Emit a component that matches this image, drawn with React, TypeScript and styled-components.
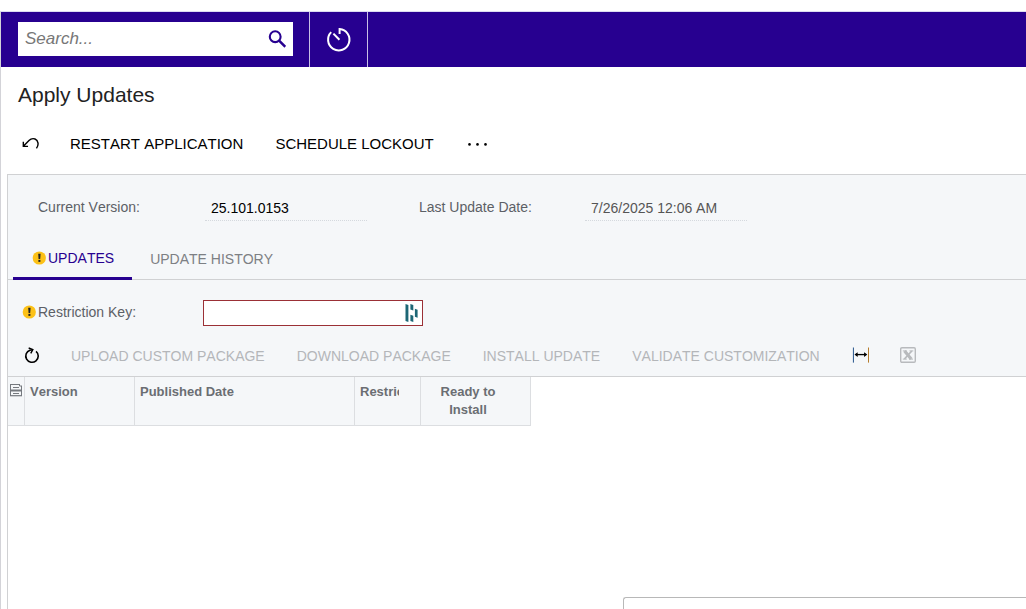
import React from "react";
import styled, { createGlobalStyle, css } from "styled-components";

const brand = "#270090";
const line = "#d0d1d3";
const panel = "#f5f7f9";

const GlobalStyle = createGlobalStyle`
  *, *::before, *::after { box-sizing: border-box; }
  body {
    margin: 0;
    background: #fff;
    color: #222;
    font-family: "Liberation Sans", Arial, sans-serif;
    font-size: 14px;
    font-kerning: none;
    line-height: 18px;
    overflow: hidden;
  }
  button, input { font: inherit; font-kerning: none; color: inherit; }
`;

const Page = styled.div`
  display: flex;
  flex-direction: column;
  min-height: 100vh;
  padding-top: 11px;
`;

const Frame = styled.div`
  display: flex;
  flex-direction: column;
  flex: 1;
  border-top: 1px solid #dcdcf0;
  border-left: 1px solid #d3d3d8;
`;

const TopBar = styled.header`
  display: flex;
  height: 55px;
  background: ${brand};
`;

const SearchForm = styled.form`
  display: flex;
  align-items: center;
  width: 275px;
  height: 34px;
  margin: 10px 16px 0 17px;
  background: #fff;
`;

const SearchInput = styled.input`
  flex: 1;
  min-width: 0;
  height: 32px;
  padding: 0 7px;
  border: 0;
  outline: 0;
  background: transparent;
  font-size: 17px;
  font-style: italic;
  &::placeholder { color: #777; opacity: 1; }
`;

const IconButton = styled.button`
  display: flex;
  align-items: center;
  justify-content: center;
  flex: none;
  padding: 0;
  border: 0;
  background: none;
  cursor: pointer;
`;

const SearchButton = styled(IconButton)`
  width: 32px;
  height: 32px;
`;

const HistoryButton = styled(IconButton)`
  width: 59px;
  border-left: 1px solid #c9bfe6;
  border-right: 1px solid #c9bfe6;
`;

const Title = styled.h1`
  margin: 0;
  padding: 16px 17px 0;
  font-size: 21px;
  line-height: 24px;
  font-weight: 400;
`;

const Toolbar = styled.div<{ $compact?: boolean }>`
  display: flex;
  align-items: center;
  white-space: nowrap;
  gap: 31px;
  ${(p) =>
    p.$compact
      ? css`
          height: 40px;
          padding: 0 15px;
          font-size: 14px;
        `
      : css`
          height: 67px;
          padding: 6px 21px 0;
          font-size: 15px;
        `}
`;

const ToolButton = styled.button`
  flex: none;
  padding: 0 1px 0 0;
  border: 0;
  background: none;
  color: #000;
  cursor: pointer;
  &:disabled { color: #b4b6b9; cursor: default; }
`;

const ToolIcon = styled(IconButton)<{ $wide?: boolean }>`
  width: ${(p) => (p.$wide ? 22 : 17)}px;
  height: 20px;
`;

const Content = styled.main`
  display: flex;
  flex-direction: column;
  flex: 1;
  margin-left: 6px;
  border-top: 1px solid ${line};
  border-left: 1px solid ${line};
`;

const Panel = styled.section`
  background: ${panel};
`;

const Summary = styled.div`
  display: grid;
  grid-template-columns: 167px 162px 52px 166px 162px;
  padding: 20px 0 0 30px;
  height: 65px;
`;

const Label = styled.label`
  color: #5c6066;
  line-height: 24px;
  white-space: nowrap;
`;

const ReadOnly = styled.input<{ $strong?: boolean }>`
  width: 100%;
  height: 26px;
  padding: 0 6px;
  border: 0;
  border-bottom: 1px dotted #d5d9de;
  outline: 0;
  background: transparent;
  color: ${(p) => (p.$strong ? "#000" : "#555")};
`;

const Gap = styled.span``;

const Tabs = styled.div`
  display: flex;
  height: 40px;
  padding-left: 5px;
  border-bottom: 1px solid ${line};
`;

const Tab = styled.button<{ $active?: boolean }>`
  display: flex;
  align-items: center;
  gap: 2px;
  height: 40px;
  padding: ${(p) => (p.$active ? "0 18px 1px 19px" : "1px 18px 3px")};
  border: 0;
  border-bottom: ${(p) => (p.$active ? "3px" : "0")} solid ${brand};
  background: none;
  color: ${(p) => (p.$active ? brand : "#7d8084")};
  white-space: nowrap;
  cursor: pointer;
`;

const KeyRow = styled.div`
  display: flex;
  align-items: center;
  height: 56px;
  padding: 10px 0 0 14px;
`;

const KeyLabel = styled(Label)`
  display: flex;
  align-items: center;
  gap: 2px;
  width: 181px;
  padding-bottom: 2px;
`;

const KeyField = styled.div`
  display: flex;
  align-items: center;
  width: 220px;
  height: 26px;
  padding-right: 3px;
  border: 1px solid #9b3036;
  background: #fff;
`;

const KeyInput = styled.input`
  flex: 1;
  min-width: 0;
  height: 22px;
  padding: 0 6px;
  border: 0;
  outline: 0;
  background: transparent;
`;

const GridArea = styled.div`
  border-top: 1px solid ${line};
`;

const Table = styled.table`
  table-layout: fixed;
  width: 523px;
  border-collapse: separate;
  border-spacing: 0;
`;

const HeadCell = styled.th<{ $w: number; $align?: string; $tight?: boolean }>`
  width: ${(p) => p.$w}px;
  height: 49px;
  padding: ${(p) => (p.$tight ? "6px 0 0 1px" : "6px 5px 0")};
  border-right: 1px solid #dcdee1;
  border-bottom: 1px solid #dcdee1;
  background: ${panel};
  color: #6b6e73;
  font-size: 13px;
  font-weight: 700;
  line-height: 18px;
  text-align: ${(p) => p.$align || "left"};
  vertical-align: top;
`;

const Clip = styled.div`
  width: 39px;
  overflow: hidden;
  white-space: nowrap;
`;

const TwoLine = styled.div`
  width: 84px;
  padding: 0 8px;
`;

const Notice = styled.aside`
  width: 403px;
  height: 12px;
  margin: auto 0 0 auto;
  border: 1px solid #b8b8b8;
  border-right: 0;
  border-bottom: 0;
  border-top-left-radius: 3px;
`;

const Warning = () => (
  <svg width="14" height="14" viewBox="0 0 14 14" aria-hidden="true">
    <circle cx="7.3" cy="7" r="6.6" fill="#fcc117" />
    <path d="M6.2 2.8h2.4L8.2 8H6.6z" fill="#222" />
    <rect x="6.4" y="8.9" width="2" height="2" fill="#222" />
  </svg>
);

export default function App() {
  return (
    <Page>
      <GlobalStyle />
      <Frame>
        <TopBar>
          <SearchForm role="search" onSubmit={(e) => e.preventDefault()}>
            <SearchInput aria-label="Search" placeholder="Search..." />
            <SearchButton aria-label="Run search">
              <svg width="18" height="18" viewBox="0 0 18 18" fill="none" stroke={brand}>
                <circle cx="7.2" cy="6.7" r="5.4" strokeWidth="2.1" />
                <path d="M11.1 10.6l6.2 6.2" strokeWidth="2.5" />
              </svg>
            </SearchButton>
          </SearchForm>
          <HistoryButton aria-label="Recent">
            <svg width="26" height="26" viewBox="0 0 26 26" fill="none" stroke="#fff" strokeWidth="2">
              <path d="M5.2 5.1A10.7 10.7 0 1 0 13.6 2V7" />
              <path d="M7.4 6.6l6 6.2" />
            </svg>
          </HistoryButton>
        </TopBar>

        <Title>Apply Updates</Title>
        <Toolbar>
          <ToolIcon aria-label="Cancel">
            <svg width="18" height="14" viewBox="0 0 18 14" fill="none" stroke="#000" strokeWidth="1.5">
              <path d="M1.4 4.5V9.5h5M1.7 9.2L7.4 3.4C9.2 1.5 11.6.9 13.8 1.7c3.5 1.3 4.3 6.2 1.5 9.9" />
            </svg>
          </ToolIcon>
          <ToolButton>RESTART APPLICATION</ToolButton>
          <ToolButton>SCHEDULE LOCKOUT</ToolButton>
          <ToolIcon $wide aria-label="More">
            <svg width="20" height="4" viewBox="0 0 20 4" fill="#000">
              <circle cx="2.5" cy="2.4" r="1.3" />
              <circle cx="10.5" cy="2.4" r="1.3" />
              <circle cx="18.5" cy="2.4" r="1.3" />
            </svg>
          </ToolIcon>
        </Toolbar>

        <Content>
          <Panel>
            <Summary>
              <Label htmlFor="version">Current Version:</Label>
              <ReadOnly id="version" $strong readOnly value="25.101.0153" />
              <Gap />
              <Label htmlFor="updated">Last Update Date:</Label>
              <ReadOnly id="updated" readOnly value="7/26/2025 12:06 AM" />
            </Summary>

            <Tabs role="tablist">
              <Tab role="tab" aria-selected="true" $active>
                <Warning />
                UPDATES
              </Tab>
              <Tab role="tab" aria-selected="false">UPDATE HISTORY</Tab>
            </Tabs>

            <KeyRow>
              <KeyLabel htmlFor="key">
                <Warning />
                Restriction Key:
              </KeyLabel>
              <KeyField>
                <KeyInput id="key" />
                <IconButton type="button" aria-label="Fill from password manager">
                  <svg width="14" height="18" viewBox="0 0 14 18" fill="#1c6675">
                    <path d="M.5 0L3.4 1v17L.5 17z" />
                    <path d="M5.4 0l2.9 1v5.6l-2.9-1z" />
                    <path d="M5.4 10.8l2.9 1V18l-2.9-1z" />
                    <path d="M9.9 4.8l2.7 1v8l-2.7-1z" />
                  </svg>
                </IconButton>
              </KeyField>
            </KeyRow>

            <Toolbar $compact>
              <ToolIcon aria-label="Refresh">
                <svg width="18" height="18" viewBox="0 0 18 18" fill="none" stroke="#000" strokeWidth="1.7">
                  <path d="M13.8 4A6.6 6.6 0 1 1 7.4 2.8" />
                  <path d="M6 .5l4.4 1.7-2.2 4" strokeWidth="1.5" />
                  <path d="M7 3l3-.6" strokeWidth="1.5" />
                </svg>
              </ToolIcon>
              <ToolButton disabled>UPLOAD CUSTOM PACKAGE</ToolButton>
              <ToolButton disabled>DOWNLOAD PACKAGE</ToolButton>
              <ToolButton disabled>INSTALL UPDATE</ToolButton>
              <ToolButton disabled>VALIDATE CUSTOMIZATION</ToolButton>
              <ToolIcon aria-label="Fit to screen">
                <svg width="18" height="18" viewBox="0 0 18 18">
                  <path d="M1.5 0v16" stroke="#174a86" />
                  <path d="M17.5 0v16" stroke="#b0731d" />
                  <path d="M4 7.5h11" stroke="#000" strokeWidth="1.4" />
                  <path d="M2.6 7.5L6 4.9v5.2zM16.2 7.5l-3.4-2.6v5.2z" fill="#000" />
                </svg>
              </ToolIcon>
              <ToolIcon disabled aria-label="Export to Excel">
                <svg width="16" height="18" viewBox="0 0 16 18" fill="none" stroke="#b8babd">
                  <rect x=".7" y=".7" width="14.6" height="14.6" rx="1.2" strokeWidth="1.4" />
                  <path d="M4.6 4l6.6 8" strokeWidth="3.2" />
                  <path d="M11.8 4l-7.4 8" strokeWidth="1.8" />
                  <path d="M2.8 3.9h4M9.5 3.9h3.8M2.8 12.1h4M9 12.1h4" />
                </svg>
              </ToolIcon>
            </Toolbar>
          </Panel>

          <GridArea>
            <Table>
              <thead>
                <tr>
                  <HeadCell $w={17} $tight aria-label="Files">
                    <svg width="14" height="14" viewBox="0 0 14 14" fill="none" stroke="#75797e">
                      <path d="M2 1.5h8.5M1.5 1v12M12.5 3v10M10.5 1v2H13" />
                      <path d="M4 4.5h6" />
                      <path d="M1 7.5h12" strokeWidth="2" />
                      <path d="M1 12.7h12" strokeWidth="1.2" />
                      <path d="M4 10.5h6" />
                    </svg>
                  </HeadCell>
                  <HeadCell $w={110}>Version</HeadCell>
                  <HeadCell $w={220}>Published Date</HeadCell>
                  <HeadCell $w={66}>
                    <Clip>Restricted</Clip>
                  </HeadCell>
                  <HeadCell $w={110} $align="center">
                    <TwoLine>Ready to Install</TwoLine>
                  </HeadCell>
                </tr>
              </thead>
            </Table>
          </GridArea>

          <Notice />
        </Content>
      </Frame>
    </Page>
  );
}
